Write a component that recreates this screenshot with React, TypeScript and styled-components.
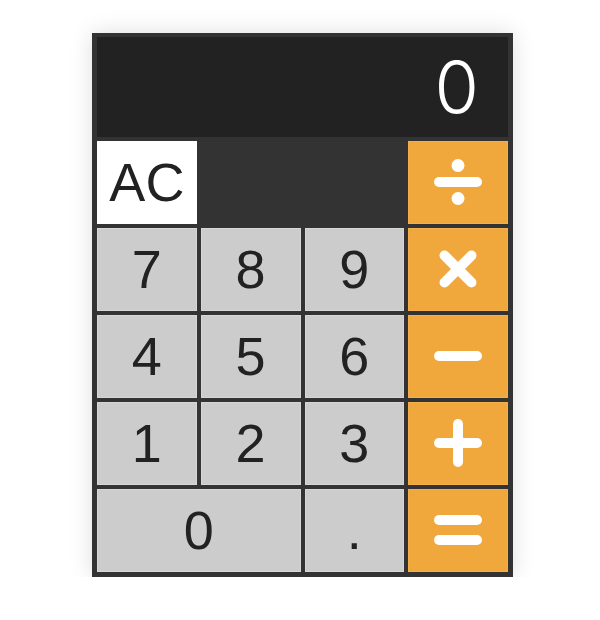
import styled, { createGlobalStyle } from 'styled-components';

const GlobalStyle = createGlobalStyle`
  html, body {
    margin: 0;
    padding: 0;
    background: #fff;
  }
`;

const Page = styled.div`
  display: flex;
  align-items: flex-start;
  padding: 33px 0 0 92px;
`;

const Frame = styled.div`
  width: 421px;
  box-sizing: border-box;
  padding: 4px 5px 5px 5px;
  background: #333;
  box-shadow: 0 0 22px rgba(0, 0, 0, 0.13);
  display: flex;
  flex-direction: column;
  gap: 4px;
`;

const Display = styled.div`
  height: 100px;
  background: #222;
  color: #fff;
  display: flex;
  align-items: center;
  justify-content: flex-end;
  padding: 0 29px 0 0;
  box-sizing: border-box;
  font-family: Inter, 'Liberation Sans', sans-serif;
  font-weight: 300;
  font-size: 72px;
  line-height: 1;
`;

const Keypad = styled.div`
  display: grid;
  grid-template-columns: repeat(4, 1fr);
  grid-auto-rows: 83px;
  gap: 4px;
`;

type Kind = 'digit' | 'clear' | 'op';

const keyBg = { digit: '#cccccc', clear: '#ffffff', op: '#f0a83c' };
const keyEdge = { digit: '#d6d6d6', clear: '#ffffff', op: '#f3b04a' };

const Key = styled.button<{ $kind: Kind; $span?: number; $col?: number }>`
  all: unset;
  box-sizing: border-box;
  grid-column: ${({ $col, $span }) => ($col ? `${$col} / span ${$span || 1}` : `span ${$span || 1}`)};
  background: ${({ $kind }) => keyBg[$kind]};
  border: 1px solid ${({ $kind }) => keyEdge[$kind]};
  color: #222;
  display: flex;
  align-items: center;
  justify-content: center;
  font-family: 'Liberation Sans', Arial, sans-serif;
  font-size: 54px;
  line-height: 1;
  padding-bottom: 2px;
  cursor: pointer;
`;

const OpIcon = styled.svg`
  width: 50px;
  height: 50px;
  display: block;
`;

function Divide() {
  return (
    <OpIcon viewBox='0 0 50 50'>
      <line x1='6' y1='25' x2='44' y2='25' stroke='#fff' strokeWidth='10' strokeLinecap='round' />
      <circle cx='25' cy='8.5' r='6.5' fill='#fff' />
      <circle cx='25' cy='41.5' r='6.5' fill='#fff' />
    </OpIcon>
  );
}

function Times() {
  return (
    <OpIcon viewBox='0 0 50 50'>
      <g stroke='#fff' strokeWidth='10' strokeLinecap='round'>
        <line x1='11.5' y1='11.5' x2='38.5' y2='38.5' />
        <line x1='38.5' y1='11.5' x2='11.5' y2='38.5' />
      </g>
    </OpIcon>
  );
}

function Minus() {
  return (
    <OpIcon viewBox='0 0 50 50'>
      <line x1='6' y1='25' x2='44' y2='25' stroke='#fff' strokeWidth='10' strokeLinecap='round' />
    </OpIcon>
  );
}

function Plus() {
  return (
    <OpIcon viewBox='0 0 50 50'>
      <g stroke='#fff' strokeWidth='10' strokeLinecap='round'>
        <line x1='6' y1='25' x2='44' y2='25' />
        <line x1='25' y1='6' x2='25' y2='44' />
      </g>
    </OpIcon>
  );
}

function Equals() {
  return (
    <OpIcon viewBox='0 0 50 50'>
      <g stroke='#fff' strokeWidth='10' strokeLinecap='round'>
        <line x1='6' y1='15' x2='44' y2='15' />
        <line x1='6' y1='35' x2='44' y2='35' />
      </g>
    </OpIcon>
  );
}

export default function App() {
  return (
    <>
      <GlobalStyle />
      <Page>
        <Frame>
          <Display>0</Display>
          <Keypad>
            <Key $kind='clear'>AC</Key>
            <Key $kind='op' $col={4} aria-label='divide'>
              <Divide />
            </Key>
            <Key $kind='digit'>7</Key>
            <Key $kind='digit'>8</Key>
            <Key $kind='digit'>9</Key>
            <Key $kind='op' aria-label='multiply'>
              <Times />
            </Key>
            <Key $kind='digit'>4</Key>
            <Key $kind='digit'>5</Key>
            <Key $kind='digit'>6</Key>
            <Key $kind='op' aria-label='subtract'>
              <Minus />
            </Key>
            <Key $kind='digit'>1</Key>
            <Key $kind='digit'>2</Key>
            <Key $kind='digit'>3</Key>
            <Key $kind='op' aria-label='add'>
              <Plus />
            </Key>
            <Key $kind='digit' $span={2}>0</Key>
            <Key $kind='digit'>.</Key>
            <Key $kind='op' aria-label='equals'>
              <Equals />
            </Key>
          </Keypad>
        </Frame>
      </Page>
    </>
  );
}
